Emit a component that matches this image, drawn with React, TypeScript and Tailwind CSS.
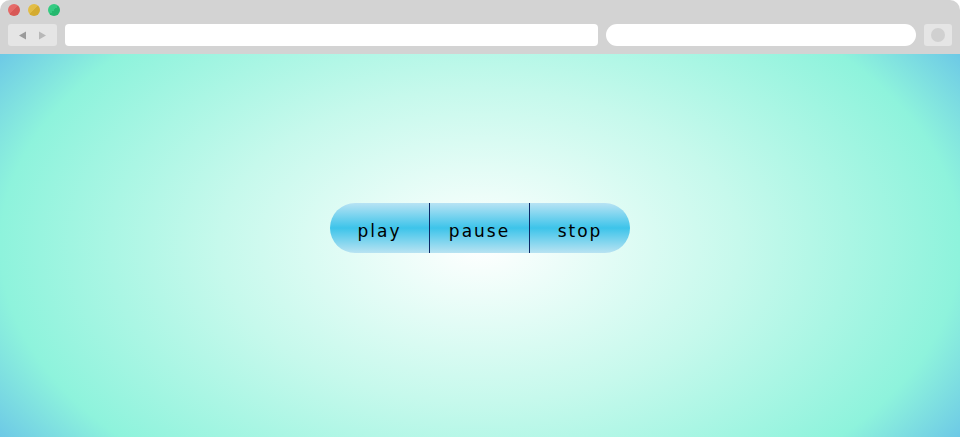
import React from 'react';

const Light: React.FC<{ className: string }> = ({ className }) => (
  <div className={`w-3 h-3 rounded-full ${className}`} />
);

const App: React.FC = () => {
  const buttons = ['play', 'pause', 'stop'];

  return (
    <div className="w-[960px] h-[437px] bg-white flex flex-col overflow-hidden">
      {/* Browser chrome */}
      <header className="flex-none h-[54px] bg-[#d3d3d3] rounded-t-[10px] px-2 pt-[4px] flex flex-col">
        <div className="flex items-center gap-2 h-[12px]">
          <Light className="bg-[linear-gradient(135deg,#e56a68_50%,#d85856_50%)]" />
          <Light className="bg-[linear-gradient(135deg,#e2bd45_50%,#d4ab30_50%)]" />
          <Light className="bg-[linear-gradient(135deg,#35cb82_50%,#25b86e_50%)]" />
        </div>
        <div className="flex items-center gap-2 mt-[8px] h-[22px]">
          <div className="w-[49px] h-[22px] bg-[#e5e5e5] rounded-[3px] flex items-center justify-around px-1">
            <svg width="9" height="9" viewBox="0 0 9 9">
              <path d="M1 4.5 L8 0.5 L8 8.5 Z" fill="#9a9a9a" />
            </svg>
            <svg width="9" height="9" viewBox="0 0 9 9">
              <path d="M8 4.5 L1 0.5 L1 8.5 Z" fill="#b8b8b8" />
            </svg>
          </div>
          <div className="w-[533px] h-[22px] bg-white rounded-[4px]" />
          <div className="w-[310px] h-[22px] bg-white rounded-full" />
          <div className="w-[28px] h-[22px] bg-[#e5e5e5] rounded-[3px] flex items-center justify-center">
            <div className="w-[14px] h-[14px] rounded-full bg-[#d0d0d0]" />
          </div>
        </div>
      </header>

      {/* Content */}
      <main className="flex-1 flex items-center justify-center bg-[radial-gradient(578px_348px_at_50%_50%,#ffffff_0%,#c6f9ec_45%,#8ef3dc_83%,#6cc8e6_100%)]">
        <div className="flex h-[50px] rounded-full overflow-hidden bg-[linear-gradient(to_bottom,#b8e3f4_0%,#3dc4ea_50%,#b9e3f2_100%)] -mt-[36px]">
          {buttons.map((label, i) => (
            <button
              key={label}
              className={`w-[100px] h-full flex items-center justify-center pt-[9px] text-[17px] tracking-[2px] text-black font-['DejaVu_Sans',sans-serif] ${i < buttons.length - 1 ? 'border-r border-[#0c2a66]' : ''}`}
            >
              {label}
            </button>
          ))}
        </div>
      </main>
    </div>
  );
};

export default App;
